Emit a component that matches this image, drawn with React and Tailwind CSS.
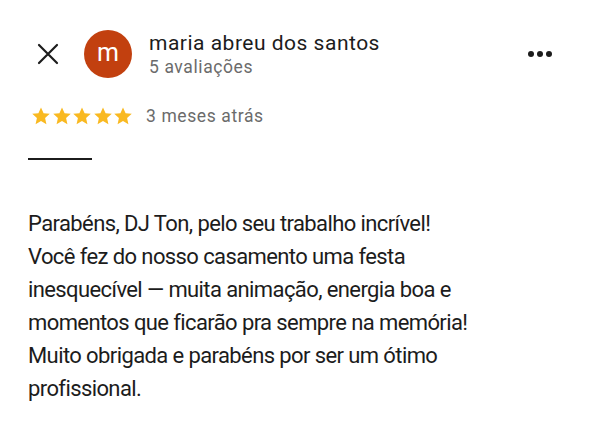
import React from 'react';

const Star = () => (
  <svg width="20" height="20" viewBox="0 0 24 24" className="shrink-0">
    <path
      d="M12 1.8l3.1 6.9 7.4.7-5.6 5 1.6 7.4L12 17.9l-6.5 3.9 1.6-7.4-5.6-5 7.4-.7z"
      fill="#f9b921"
    />
  </svg>
);

export default function App() {
  return (
    <div
      className="w-[590px] h-[435px] bg-white text-[#1c1c1c] overflow-hidden"
      style={{ fontFamily: 'Roboto, "Noto Sans", sans-serif' }}
    >
      <div className="flex items-center pt-[30px] pl-[37px] pr-[38px]">
        <svg width="22" height="22" viewBox="0 0 22 22" className="shrink-0">
          <path d="M2 2L20 20M20 2L2 20" stroke="#1c1c1c" strokeWidth="2.2" strokeLinecap="round" />
        </svg>
        <div className="ml-[25px] w-[48px] h-[48px] rounded-full bg-[#c2400f] flex items-center justify-center text-white text-[25px] leading-none pb-[3px]">
          m
        </div>
        <div className="ml-[17px] flex flex-col">
          <span className="text-[21px] leading-[25px] tracking-[0.5px]">maria abreu dos santos</span>
          <span className="text-[17.5px] leading-[22px] tracking-[0.6px] text-[#6b6b6b]">5 avaliações</span>
        </div>
        <div className="ml-auto flex gap-[3px] items-center">
          <span className="w-[6px] h-[6px] rounded-full bg-[#1c1c1c]" />
          <span className="w-[6px] h-[6px] rounded-full bg-[#1c1c1c]" />
          <span className="w-[6px] h-[6px] rounded-full bg-[#1c1c1c]" />
        </div>
      </div>

      <div className="flex items-center mt-[25px] pl-[31px]">
        <div className="flex gap-[0.5px]">
          <Star />
          <Star />
          <Star />
          <Star />
          <Star />
        </div>
        <span className="ml-[13px] text-[17.5px] tracking-[0.6px] text-[#6b6b6b]">3 meses atrás</span>
      </div>

      <div className="ml-[28px] mt-[29px] w-[64px] h-[2px] bg-[#1c1c1c]" />

      <p className="mt-[47px] px-[28px] text-[22px] leading-[33px] tracking-[-0.6px] text-[#1c1c1c]">
        Parabéns, DJ Ton, pelo seu trabalho incrível!
        <br />
        Você fez do nosso casamento uma festa
        <br />
        inesquecível — muita animação, energia boa e
        <br />
        momentos que ficarão pra sempre na memória!
        <br />
        Muito obrigada e parabéns por ser um ótimo
        <br />
        profissional.
      </p>
    </div>
  );
}
